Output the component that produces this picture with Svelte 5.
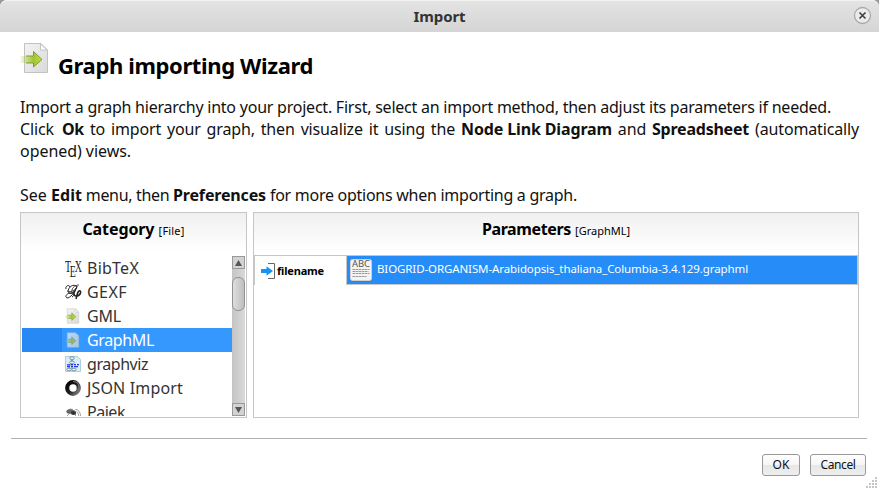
<script>
  const categories = [
    { name: 'BibTeX', icon: 'tex', width: 52 },
    { name: 'GEXF', icon: 'gexf', width: 40 },
    { name: 'GML', icon: 'file', width: 34 },
    { name: 'GraphML', icon: 'file', width: 67 },
    { name: 'graphviz', icon: 'graphviz', width: 61 },
    { name: 'JSON Import', icon: 'json', width: 96 },
    { name: 'Pajek', icon: 'spider', width: 38 }
  ];
  let selected = $state('GraphML');

  // Tracks a label so that it spans the given number of pixels.
  function fit(node, width) {
    const natural = node.getBoundingClientRect().width;
    const count = node.textContent.length;
    node.style.letterSpacing = `${(width - natural) / count}px`;
  }

  // Spans the given width by widening the gaps between words only.
  function spread(node, width) {
    const natural = node.getBoundingClientRect().width;
    const gaps = node.textContent.split(' ').length - 1;
    node.style.wordSpacing = `${(width - natural) / gaps}px`;
  }
</script>

{#snippet fileIcon(size)}
  <svg width={size} height={size} viewBox="0 0 32 32">
    <defs>
      <linearGradient id="paper" x1="0" y1="0" x2="1" y2="1"><stop stop-color="#f4f4f4" /><stop offset="1" stop-color="#d9d9d9" /></linearGradient>
      <linearGradient id="arrow"><stop stop-color="#b5d251" stop-opacity=".15" /><stop offset=".6" stop-color="#a4c52f" /><stop offset="1" stop-color="#c3da50" /></linearGradient>
    </defs>
    <path d="M4.500 1.500H21l6.500 6.500V30.500H4.500Z" fill="url(#paper)" stroke="#c2c2c2" />
    <path d="M20.500 2V8H27Z" fill="#fff" stroke="#b9b9b9" stroke-width=".8" />
    <path d="M.5 14H13.500V9.500L22 17.500 13.500 25V21H.5Z" fill="url(#arrow)" />
    <path d="M6 14H13.500V9.500L22 17.500 13.500 25V21H6" fill="none" stroke="#6f9928" stroke-width=".9" />
  </svg>
{/snippet}

<div class="window">
  <header>
    <b use:fit={52}>Import</b>
    <svg class="close" width="19" height="19" viewBox="0 0 19 19">
      <circle cx="9.500" cy="9.500" r="8" fill="#ebebeb" stroke="#aaa" stroke-width="1.300" />
      <path d="M6.500 6.500l6 6m0-6l-6 6" stroke="#444" stroke-width="1.700" />
    </svg>
  </header>

  <main>
    <div class="heading">
      {@render fileIcon(32)}
      <h1><span use:fit={255}>Graph importing Wizard</span></h1>
    </div>
    <div class="intro">
      <div><span use:fit={811}>Import a graph hierarchy into your project. First, select an import method, then adjust its parameters if needed.</span></div>
      <div class="wide"><span use:spread={42}>{'Click '}</span><b use:fit={22}>Ok</b><span use:spread={377}>{' to import your graph, then visualize it using the '}</span><b use:fit={151}>Node Link Diagram</b><span use:spread={40}>{' and '}</span><b use:fit={97}>Spreadsheet</b><span use:spread={110}>{' (automatically'}</span></div>
      <div><span use:fit={111}>opened) views.</span></div>
      <div></div>
      <div><span use:fit={31}>{'See '}</span><b use:fit={31}>Edit</b><span use:fit={91}>{' menu, then '}</span><b use:fit={93}>Preferences</b><span use:fit={311}>{' for more options when importing a graph.'}</span></div>
    </div>

    <div class="panels">
      <section class="category">
        <h2><span use:fit={72}>Category</span> <small use:fit={26}>[File]</small></h2>
        <div class="browser">
          <ul>
            {#each categories as item}
              <li class:selected={selected === item.name}>
                <button onclick={() => (selected = item.name)}>
                  <span class="icon">
                    {#if item.icon === 'tex'}
                      <span class="tex"><i>T</i><i>E</i><i>X</i></span>
                    {:else if item.icon === 'gexf'}
                      <svg width="17" height="16" viewBox="0 0 17 16" fill="none" stroke="#222">
                        <path d="M1 5C0 2 4 0 5 3M11 2C7-1 1 6 4 9c3 2 7-3 8-7-1 5-5 10-9 12-4 0-2-5 3-5 3 0 4 2 1 4" />
                        <path stroke-width=".8" d="M14 1C9 1 6 5 7 9M2 7c4 2 8-1 10-4" />
                        <path stroke-width="1.500" d="M10 7c-2 2-1 5 1 5 5 0 6-6 3-5-2 1-2 5-3 8" />
                      </svg>
                    {:else if item.icon === 'file'}
                      {@render fileIcon(16)}
                    {:else if item.icon === 'graphviz'}
                      <svg width="16" height="16" viewBox="0 0 16 16">
                        <path d="M.5.5h12l3 3v12H.5z" fill="#d9eff6" stroke="#a9d0dd" />
                        <g fill="#e5f2f6" stroke="#607f91" stroke-width=".8"><path d="M7 4L4 12m3-8v9" /><ellipse cx="7" cy="2.200" rx="2.200" ry="1.500" /><ellipse cx="7" cy="6.500" rx="2.400" ry="1.400" /><ellipse cx="4" cy="13.500" rx="2.200" ry="1.300" /><ellipse cx="9" cy="13.500" rx="2.200" ry="1.300" /></g>
                        <path d="M2 8.800h3m-3 1.800h3m1-2h2m-2 2h2m1-2h2m-2 2h2m1-2h2m-3 2h2" stroke="#2433e5" stroke-width="1.200" />
                      </svg>
                    {:else if item.icon === 'json'}
                      <svg width="17" height="16" viewBox="0 0 17 16" fill="none">
                        <defs><linearGradient id="ring" x2="1" y2="1"><stop stop-color="#000" /><stop offset=".55" stop-color="#222" /><stop offset="1" stop-color="#888" /></linearGradient></defs>
                        <circle cx="8" cy="8" r="5.800" stroke="url(#ring)" stroke-width="4.200" />
                        <path d="M8 1.500c6 0 8 6 4 10" stroke="#777" stroke-width="1.200" />
                      </svg>
                    {:else}
                      <svg width="17" height="16" viewBox="0 0 17 16">
                        <path d="M2 7q4-4 7 0 3-4 6 2l1 4M10 8q3-2 4 5M6 8l-4 4M9 7l2 6" fill="none" stroke="#999" stroke-width=".9" />
                        <ellipse cx="5" cy="7.500" rx="3.800" ry="2.200" fill="#666" transform="rotate(-8 5 7)" /><ellipse cx="8.500" cy="9" rx="2.600" ry="2.100" fill="#333" />
                      </svg>
                    {/if}
                  </span>
                  <span use:fit={item.width}>{item.name}</span>
                </button>
              </li>
            {/each}
          </ul>
          <div class="scrollbar">
            <span class="step"><svg width="7" height="6"><path d="M3.500 0L7 6H0z" fill="#555" /></svg></span>
            <span class="track"><span class="thumb"></span></span>
            <span class="step"><svg width="7" height="6"><path d="M0 0h7L3.500 6z" fill="#555" /></svg></span>
          </div>
        </div>
      </section>

      <section class="parameters">
        <h2><span use:fit={89}>Parameters</span> <small use:fit={55}>[GraphML]</small></h2>
        <div class="row">
          <div class="label">
            <svg width="15" height="18" viewBox="0 0 15 18">
              <path d="M7 1.500h6.500v15H7" fill="none" stroke="#666" />
              <path d="M0 7h5.500V4.200L12 9 5.500 13.800V11H0z" fill="#1794f1" />
            </svg>
            <b use:fit={47}>filename</b>
          </div>
          <div class="value">
            <svg width="22" height="23" viewBox="0 0 22 23">
              <rect x=".5" y="1" width="21" height="21.500" rx="2" fill="#57738b" />
              <rect x=".5" y=".5" width="21" height="21" rx="2" fill="#f3f3f3" stroke="#d1d1d1" />
              <text x="2" y="8" font-size="8" textLength="18" lengthAdjust="spacingAndGlyphs" fill="#555">ABC</text>
              <path d="M2.500 10.500h17m-17 2h16m-16 2h17m-17 3h14" stroke="#999" stroke-dasharray="3 .6 2 .4" />
            </svg>
            <span use:fit={371}>BIOGRID-ORGANISM-Arabidopsis_thaliana_Columbia-3.4.129.graphml</span>
          </div>
        </div>
      </section>
    </div>
  </main>

  <footer>
    <button class="ok"><span use:fit={17}>OK</span></button>
    <button class="cancel"><span use:fit={35}>Cancel</span></button>
  </footer>
  <svg class="grip" width="12" height="12" fill="#c6c6c6">
    <path d="M9 0h2v2H9zM6 3h2v2H6zM9 3h2v2H9zM3 6h2v2H3zM6 6h2v2H6zM9 6h2v2H9zM0 9h2v2H0zM3 9h2v2H3zM6 9h2v2H6zM9 9h2v2H9z" />
  </svg>
</div>

<style>
  .window { box-sizing: border-box; position: relative; width: 879px; height: 490px; overflow: hidden; background: #fff; color: #111; font: 16px/22px "Noto Sans", sans-serif; }
  span, b, small { white-space: pre; }
  header { position: relative; box-sizing: border-box; height: 32px; padding-bottom: 2px; display: flex; justify-content: center; align-items: center; border-top: 1px solid #f2f2f2; border-radius: 7px 7px 0 0; background: linear-gradient(#e3e3e3, #d5d5d5); box-shadow: 0 0 0 5px #999; clip-path: inset(-1px 0 0); color: #333; font-size: 15px; }
  .close { position: absolute; right: 7px; top: 5px; }
  main { padding: 10px 20px 0; }
  .heading { display: flex; height: 54px; gap: 6px; }
  h1 { margin: 8px 0 0; color: #000; font-size: 22px; line-height: 30px; }
  .intro { height: 116px; font-size: 16px; }
  .intro > div { height: 22px; white-space: nowrap; }
  .wide span { letter-spacing: -.15px; }
  .panels { display: flex; gap: 6px; height: 206px; }
  section { box-sizing: border-box; border: 1px solid #c6c6c6; background: linear-gradient(#f0f0f0, #fff 38px); }
  .category { width: 227px; }
  .parameters { flex: 1; }
  h2 { height: 42px; margin: 0; padding-top: 4px; box-sizing: border-box; text-align: center; font-size: 16px; line-height: 24px; color: #000; }
  h2 small { font-size: 11px; font-weight: 400; }
  .browser { display: flex; height: 161px; margin: 0 1px; padding-top: 1px; box-sizing: border-box; background: #fff; }
  ul { flex: 1; margin: 0; padding: 0; list-style: none; overflow: hidden; }
  li { height: 24px; }
  li button { display: flex; align-items: center; width: 100%; height: 24px; padding: 0 0 0 43px; border: 0; background: none; font: 16px/22px "Noto Sans", sans-serif; color: #333; }
  li.selected button { color: #fff; background: linear-gradient(90deg, #278af4 0 40px, #3598ff 40px); }
  .selected .icon { opacity: .7; }
  .icon { width: 17px; height: 16px; margin-right: 5px; }
  .icon :global(svg) { display: block; }
  .tex { display: flex; width: 28px; height: 16px; font: 16px/13px "Liberation Serif", serif; color: #222; transform-origin: left; transform: scaleX(.62); }
  .tex i { font-style: normal; margin-right: -2px; }
  .tex i:nth-child(2) { padding-top: 5px; }
  .scrollbar { width: 13px; display: flex; flex-direction: column; }
  .step { display: flex; align-items: center; justify-content: center; box-sizing: border-box; height: 13px; border: 1px solid #999; background: #d2d2d2; }
  .track { flex: 1; padding-top: 8px; background: linear-gradient(90deg, #c4c4c4, #d9d9d9); }
  .thumb { display: block; box-sizing: border-box; height: 34px; border: 1px solid #929292; border-radius: 6px; background: linear-gradient(90deg, #dedede, #bebebe); }
  .row { box-sizing: border-box; display: flex; height: 30px; border: solid #c6c6c6; border-width: 1px 1px 1px 0; background: #fff; }
  .label { display: flex; align-items: center; box-sizing: border-box; width: 93px; margin-bottom: -1px; padding: 0 0 0 6px; border: solid #c6c6c6; border-width: 0 1px 0 1px; background: #fff; font-size: 11px; color: #000; }
  .label b { margin-left: 1px; }
  .value { flex: 1; display: flex; align-items: center; gap: 5px; padding-left: 3px; background: #268cf8; color: #fff; font-size: 11.500px; }
  .value svg text { font-family: "Noto Sans", sans-serif; }
  .value > span { margin-top: -3px; }
  footer { box-sizing: border-box; height: 38px; margin: 20px 12px 0 11px; padding: 15px 1px 0; display: flex; justify-content: flex-end; gap: 10px; border-top: 1px solid #b3b3b3; }
  footer button { box-sizing: border-box; height: 22px; padding: 0; border: 1px solid #999; border-radius: 3px; background: linear-gradient(#fff, #f5f5f5 50%, #e7e7e7 52%, #eee); color: #111; font: 12px/18px "Noto Sans", sans-serif; }
  .ok { width: 38px; }
  .cancel { width: 56px; }
  .grip { position: absolute; right: 1px; bottom: 1px; }
</style>
